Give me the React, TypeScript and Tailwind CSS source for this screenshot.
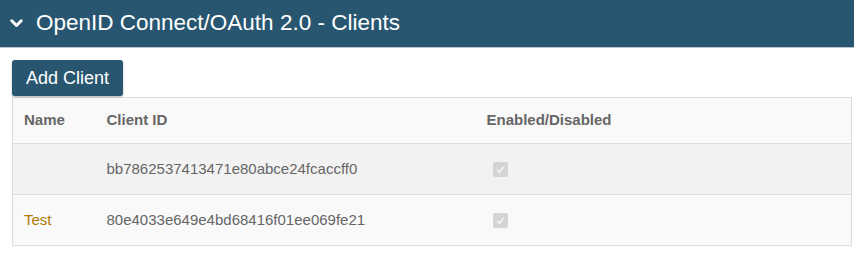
type Client = {
  name: string;
  clientId: string;
  enabled: boolean;
};

const clients: Client[] = [
  { name: "", clientId: "bb7862537413471e80abce24fcaccff0", enabled: true },
  { name: "Test", clientId: "80e4033e649e4bd68416f01ee069fe21", enabled: true },
];

export default function App() {
  return (
    <div
      className="w-[854px] h-[263px] bg-white"
      style={{ fontFamily: '"Liberation Sans", Arial, sans-serif' }}
    >
      {/* Panel heading */}
      <div className="flex h-[48px] items-center bg-[#285670] border-b border-[#b8c2c8] pl-[10px]">
        <svg viewBox="0 0 13 9" className="h-[9px] w-[13px]">
          <path
            d="M1.8 1.8 L6.5 6.5 L11.2 1.8"
            fill="none"
            stroke="#fff"
            strokeWidth="3"
            strokeLinecap="round"
            strokeLinejoin="round"
          />
        </svg>
        <h2 className="ml-[13px] text-[22.5px] text-white leading-none">
          OpenID Connect/OAuth 2.0 - Clients
        </h2>
      </div>

      <div className="px-[12px] pt-[12px]">
        <button
          type="button"
          className="h-[36px] w-[111px] rounded-[3px] bg-[#285670] text-[18px] text-white shadow-[0_1px_2px_rgba(0,0,0,0.3)]"
        >
          Add Client
        </button>

        <table className="mt-[1px] w-[840px] border-collapse text-[15px] text-[#666]">
          <thead>
            <tr className="h-[46px] bg-[#f9f9f9] border border-[#ddd]">
              <th className="w-[83px] pl-[11px] text-left font-bold">Name</th>
              <th className="w-[380px] pl-[11px] text-left font-bold">Client ID</th>
              <th className="pl-[11px] text-left font-bold">Enabled/Disabled</th>
            </tr>
          </thead>
          <tbody>
            {clients.map((c, i) => (
              <tr
                key={c.clientId}
                className={`h-[51px] border border-[#ddd] ${
                  i % 2 === 0 ? "bg-[#f2f2f2]" : "bg-[#f9f9f9]"
                }`}
              >
                <td className="pl-[11px] text-[#b07800]">{c.name}</td>
                <td className="pl-[11px]">{c.clientId}</td>
                <td className="pl-[17px]">
                  <span className="flex h-[15px] w-[15px] items-center justify-center rounded-[2px] bg-[#d4d4d4]">
                    <svg viewBox="0 0 12 12" className="h-[11px] w-[11px]">
                      <path
                        d="M2.5 6.5 L5 9 L9.5 3"
                        fill="none"
                        stroke="#f4f4f4"
                        strokeWidth="1.8"
                      />
                    </svg>
                  </span>
                </td>
              </tr>
            ))}
          </tbody>
        </table>
      </div>
    </div>
  );
}
